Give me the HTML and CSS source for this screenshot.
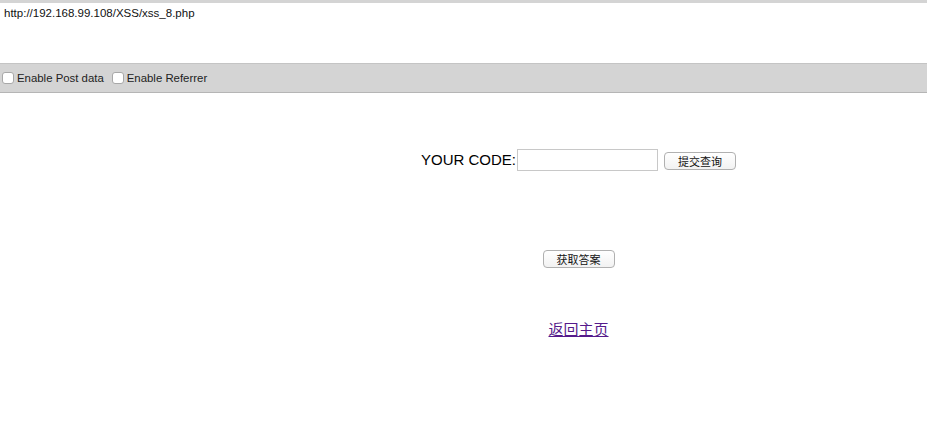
FILE: index.html
```html
<!DOCTYPE html>
<html>
<head>
<meta charset="utf-8">
<link rel="stylesheet" href="styles.css">
</head>
<body>
<div class="toolbar">
  <div class="url-box">http://192.168.99.108/XSS/xss_8.php</div>
  <div class="options">
    <label class="opt"><span class="cb"></span>Enable Post data</label>
    <label class="opt"><span class="cb"></span>Enable Referrer</label>
  </div>
</div>
<div class="main">
  <div class="code-row">
    <span class="code-label">YOUR CODE:</span><span class="code-input"></span><span class="btn btn-submit">提交查询</span>
  </div>
  <div class="answer-row">
    <span class="btn btn-answer">获取答案</span>
  </div>
  <div class="link-row">
    <a class="home-link" href="#">返回主页</a>
  </div>
</div>
</body>
</html>
```

FILE: styles.css
```css
html, body {
  margin: 0;
  padding: 0;
  background: #fff;
  font-family: "Liberation Sans", Arial, "Noto Sans CJK SC", sans-serif;
}
.toolbar {
  background: #d4d4d4;
  padding-top: 3px;
  border-bottom: 1px solid #b5b5b5;
}
.url-box {
  background: #fff;
  height: 61px;
  border-bottom: 1px solid #c4c4c4;
  font-size: 11.5px;
  line-height: 13px;
  padding: 4px 4px 0;
  box-sizing: border-box;
  color: #111;
}
.options {
  height: 28px;
  display: flex;
  align-items: center;
  padding-left: 2px;
  font-size: 11.4px;
  color: #222;
}
.opt {
  display: flex;
  align-items: center;
  margin-right: 8px;
}
.cb {
  width: 10px;
  height: 10px;
  background: #fff;
  border: 1px solid #a8a8a8;
  border-radius: 3px;
  margin-right: 3px;
}
.main {
  margin-left: 230px;
  text-align: center;
}
.code-row {
  margin-top: 56px;
  display: flex;
  justify-content: center;
  align-items: center;
  height: 22px;
}
.code-label {
  font-size: 15px;
  color: #000;
  position: relative;
  top: -1px;
}
.code-input {
  display: inline-block;
  box-sizing: border-box;
  width: 141px;
  height: 22px;
  border: 1px solid #c8c8c8;
  margin-left: 1px;
}
.btn {
  display: inline-block;
  box-sizing: border-box;
  width: 72px;
  height: 18px;
  border: 1px solid #b0b0b0;
  border-radius: 4px;
  background: linear-gradient(#fff, #f2f2f2);
  font-family: "Noto Sans CJK SC", sans-serif;
  font-size: 11px;
  line-height: 16px;
  color: #111;
  text-align: center;
}
.btn-submit {
  margin-left: 6px;
  margin-top: 2px;
}
.answer-row {
  margin-top: 79px;
  display: flex;
  justify-content: center;
}
.link-row {
  margin-top: 50px;
}
.home-link {
  font-family: "Noto Sans CJK SC", sans-serif;
  font-size: 15px;
  color: #551a8b;
  text-decoration: underline;
}
```
